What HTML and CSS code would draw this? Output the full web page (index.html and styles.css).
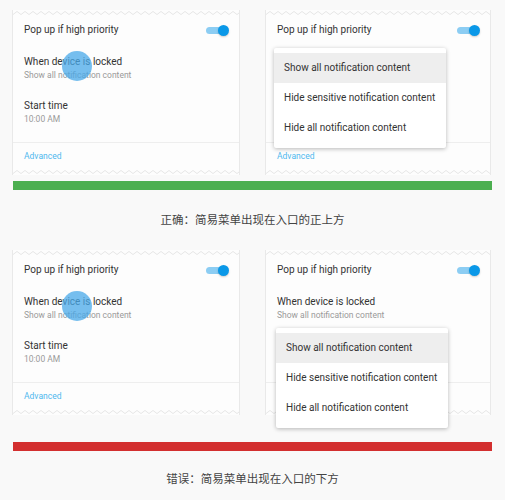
FILE: index.html
```html
<!DOCTYPE html>
<html lang="zh-CN">
<head>
  <meta charset="UTF-8">
  <title>Simple menu placement</title>
  <link rel="stylesheet" href="styles.css">
</head>
<body>

  <!-- shared zigzag pattern for the torn panel edges -->
  <svg class="defs" width="0" height="0">
    <defs>
      <pattern id="zigzag" width="8" height="6" patternUnits="userSpaceOnUse">
        <path d="M0 4.5 L4 1.5 L8 4.5" fill="none" stroke="#e6e6e6" stroke-width="1"/>
      </pattern>
    </defs>
  </svg>

  <!-- correct example -->
  <div class="example">
    <div class="panels">
      <div class="panel">
        <svg class="edge" width="100%" height="6"><rect width="100%" height="6" fill="url(#zigzag)"/></svg>
        <div class="row-pop">
          <span class="title">Pop up if high priority</span>
          <span class="toggle"><span class="thumb"></span></span>
        </div>
        <div class="item first">
          <div class="title">When device is locked</div>
          <div class="sub">Show all notification content</div>
        </div>
        <div class="item">
          <div class="title">Start time</div>
          <div class="sub">10:00 AM</div>
        </div>
        <div class="divider"></div>
        <div class="advanced">Advanced</div>
        <svg class="edge bottom" width="100%" height="6"><rect width="100%" height="6" fill="url(#zigzag)"/></svg>
        <span class="touch"></span>
      </div>

      <div class="panel">
        <svg class="edge" width="100%" height="6"><rect width="100%" height="6" fill="url(#zigzag)"/></svg>
        <div class="row-pop">
          <span class="title">Pop up if high priority</span>
          <span class="toggle"><span class="thumb"></span></span>
        </div>
        <div class="item first">
          <div class="title">When device is locked</div>
          <div class="sub">Show all notification content</div>
        </div>
        <div class="item">
          <div class="title">Start time</div>
          <div class="sub">10:00 AM</div>
        </div>
        <div class="divider"></div>
        <div class="advanced">Advanced</div>
        <svg class="edge bottom" width="100%" height="6"><rect width="100%" height="6" fill="url(#zigzag)"/></svg>
        <div class="menu menu-over">
          <div class="menu-item active">Show all notification content</div>
          <div class="menu-item">Hide sensitive notification content</div>
          <div class="menu-item">Hide all notification content</div>
        </div>
      </div>
    </div>
    <div class="bar good"></div>
    <p class="caption">正确：简易菜单出现在入口的正上方</p>
  </div>

  <!-- wrong example -->
  <div class="example">
    <div class="panels">
      <div class="panel">
        <svg class="edge" width="100%" height="6"><rect width="100%" height="6" fill="url(#zigzag)"/></svg>
        <div class="row-pop">
          <span class="title">Pop up if high priority</span>
          <span class="toggle"><span class="thumb"></span></span>
        </div>
        <div class="item first">
          <div class="title">When device is locked</div>
          <div class="sub">Show all notification content</div>
        </div>
        <div class="item">
          <div class="title">Start time</div>
          <div class="sub">10:00 AM</div>
        </div>
        <div class="divider"></div>
        <div class="advanced">Advanced</div>
        <svg class="edge bottom" width="100%" height="6"><rect width="100%" height="6" fill="url(#zigzag)"/></svg>
        <span class="touch"></span>
      </div>

      <div class="panel">
        <svg class="edge" width="100%" height="6"><rect width="100%" height="6" fill="url(#zigzag)"/></svg>
        <div class="row-pop">
          <span class="title">Pop up if high priority</span>
          <span class="toggle"><span class="thumb"></span></span>
        </div>
        <div class="item first">
          <div class="title">When device is locked</div>
          <div class="sub">Show all notification content</div>
        </div>
        <div class="item">
          <div class="title">Start time</div>
          <div class="sub">10:00 AM</div>
        </div>
        <div class="divider"></div>
        <div class="advanced">Advanced</div>
        <svg class="edge bottom" width="100%" height="6"><rect width="100%" height="6" fill="url(#zigzag)"/></svg>
        <div class="menu menu-under">
          <div class="menu-item active">Show all notification content</div>
          <div class="menu-item">Hide sensitive notification content</div>
          <div class="menu-item">Hide all notification content</div>
        </div>
      </div>
    </div>
    <div class="bar bad"></div>
    <p class="caption">错误：简易菜单出现在入口的下方</p>
  </div>

</body>
</html>
```

FILE: styles.css
```css
html, body {
  margin: 0;
  padding: 0;
  background: #f9f9f9;
  font-family: Roboto, "Noto Sans CJK SC", sans-serif;
  color: #333;
}

.defs {
  position: absolute;
}

.example {
  padding-top: 10px;
}

.example + .example {
  padding-top: 0;
}

.panels {
  display: flex;
  gap: 25px;
  margin-left: 12px;
}

.panel {
  position: relative;
  box-sizing: border-box;
  width: 228px;
  height: 165px;
  background: #fdfdfd;
  border-left: 1px solid #e9e9e9;
  border-right: 1px solid #e9e9e9;
  display: flex;
  flex-direction: column;
  padding: 0 11px;
}

.panel + .panel {
  width: 226px;
}

.edge {
  display: block;
  margin: 0 -11px;
  width: calc(100% + 22px);
}

.edge.bottom {
  margin-top: auto;
}

.row-pop {
  height: 28px;
  display: flex;
  align-items: center;
  justify-content: space-between;
}

.title {
  font-size: 10px;
  line-height: 14px;
  color: #333;
}

.sub {
  font-size: 8.5px;
  line-height: 12px;
  color: #9a9a9a;
}

.item.first {
  margin-top: 11px;
}

.item {
  margin-top: 18px;
}

.divider {
  margin: 17px -11px 0;
  height: 1px;
  background: #eeeeee;
}

.advanced {
  margin-top: 6px;
  font-size: 8.5px;
  line-height: 14px;
  color: #4fb8ee;
}

/* switch */
.toggle {
  position: relative;
  width: 18px;
  height: 7px;
  margin-right: 4px;
  border-radius: 4px;
  background: #8ccdf3;
}

.thumb {
  position: absolute;
  right: -5px;
  top: -2px;
  width: 11px;
  height: 11px;
  border-radius: 50%;
  background: #0a98e8;
  box-shadow: 0 1px 2px rgba(0, 0, 0, 0.2);
}

/* touch ripple over the entry */
.touch {
  position: absolute;
  left: 49px;
  top: 41px;
  width: 30px;
  height: 30px;
  border-radius: 50%;
  background: rgba(72, 168, 232, 0.75);
}

/* simple menu */
.menu {
  position: absolute;
  width: 172px;
  padding: 5px 0;
  background: #fff;
  box-shadow: 0 1px 4px rgba(0, 0, 0, 0.28);
  border-radius: 2px;
}

.menu-over {
  left: 8px;
  top: 38px;
}

.menu-under {
  left: 10px;
  top: 78px;
}

.menu-item {
  height: 30px;
  line-height: 30px;
  padding-left: 10px;
  font-size: 10px;
  color: #333;
  white-space: nowrap;
}

.menu-item.active {
  background: #eeeeee;
}

.bar {
  margin: 6px 0 0 13px;
  width: 479px;
  height: 9px;
}

.bar.good {
  background: #4caf50;
}

.bar.bad {
  margin-top: 27px;
  background: #d32f2f;
}

.caption {
  margin: 0;
  padding: 22px 0 22px;
  font-size: 11.5px;
  line-height: 16px;
  text-align: center;
  color: #444;
}

.bar.bad + .caption {
  padding-top: 20px;
}
```
